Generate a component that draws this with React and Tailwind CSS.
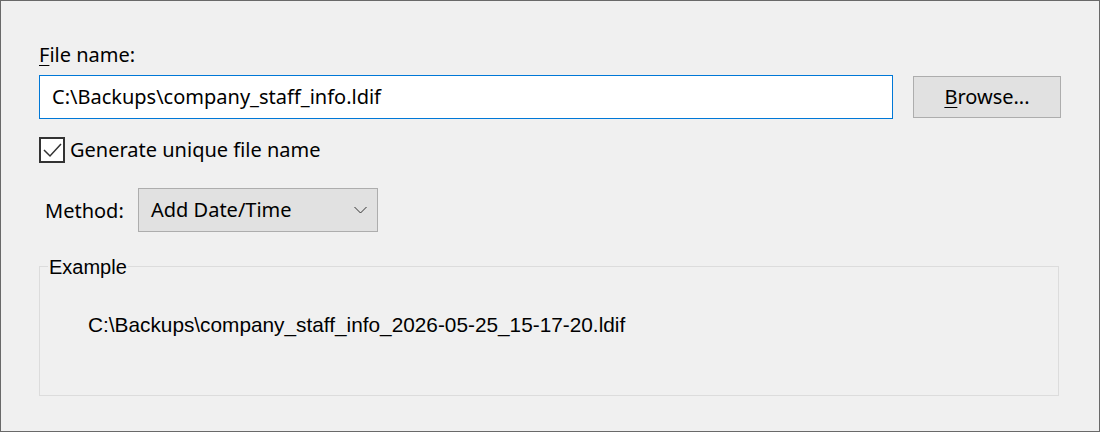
export default function App() {
  const ui = { fontFamily: '"Noto Sans", "Open Sans", sans-serif' };
  const grp = { fontFamily: '"Liberation Sans", Arial, sans-serif' };

  return (
    <div
      className="w-[1100px] h-[432px] border border-[#696969] bg-[#f0f0f0] px-[38px] pt-[42px] text-black text-[20px]"
      style={ui}
    >
      <div className="leading-[24px]">
        <span className="underline underline-offset-[3px] decoration-1">F</span>ile name:
      </div>

      <div className="mt-[8px] flex items-center gap-[20px]">
        <div className="flex-1 h-[44px] border border-[#0078d7] bg-white flex items-center pl-[12px]">
          C:\Backups\company_staff_info.ldif
        </div>
        <button className="w-[148px] h-[42px] border border-[#adadad] bg-[#e1e1e1] flex items-center justify-center">
          <span>
            <span className="underline underline-offset-[3px] decoration-1">B</span>rowse...
          </span>
        </button>
      </div>

      <div className="mt-[18px] flex items-center gap-[5px] h-[26px]">
        <div className="w-[26px] h-[26px] border-2 border-[#333333] bg-white flex items-center justify-center">
          <svg width="22" height="22" viewBox="0 0 22 22">
            <path d="M3 11 L9 17 L20 5" fill="none" stroke="#333333" strokeWidth="1.5" />
          </svg>
        </div>
        <span className="leading-[24px]">Generate unique file name</span>
      </div>

      <div className="mt-[25px] flex items-center h-[44px]">
        <span className="ml-[6px] w-[93px] pt-[1px]">Method:</span>
        <div className="w-[240px] h-[44px] border border-[#adadad] bg-[#e1e1e1] flex items-center justify-between pl-[12px] pr-[10px]">
          <span>Add Date/Time</span>
          <svg width="13" height="8" viewBox="0 0 13 8">
            <path d="M0.5 1 L6.5 7 L12.5 1" fill="none" stroke="#333333" strokeWidth="1" />
          </svg>
        </div>
      </div>

      <fieldset
        className="mt-[22px] mr-[2px] h-[142px] border border-[#dcdcdc] px-[4px] pt-[0px] m-0"
        style={grp}
      >
        <legend className="px-[1px] ml-[4px] text-[20px] leading-[22px] pt-[2px]">Example</legend>
        <div className="mt-[35px] ml-[44px] text-[20.8px] leading-[24px]">
          C:\Backups\company_staff_info_2026-05-25_15-17-20.ldif
        </div>
      </fieldset>
    </div>
  );
}
